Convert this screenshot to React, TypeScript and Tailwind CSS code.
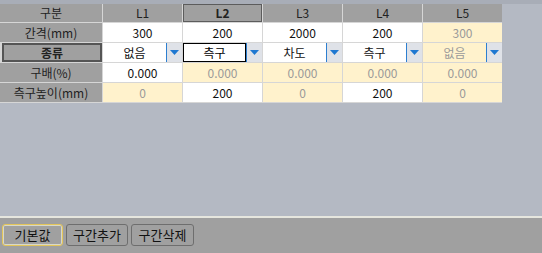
import React from "react";

type Cell = { text: string; tone: "white" | "yellow"; combo?: boolean; focus?: boolean };

const COLS = ["L1", "L2", "L3", "L4", "L5"];

const ROWS: { label: string; bold?: boolean; cells: Cell[] }[] = [
  {
    label: "간격(mm)",
    cells: [
      { text: "300", tone: "white" },
      { text: "200", tone: "white" },
      { text: "2000", tone: "white" },
      { text: "200", tone: "white" },
      { text: "300", tone: "yellow" },
    ],
  },
  {
    label: "종류",
    bold: true,
    cells: [
      { text: "없음", tone: "white", combo: true },
      { text: "측구", tone: "white", combo: true, focus: true },
      { text: "차도", tone: "white", combo: true },
      { text: "측구", tone: "white", combo: true },
      { text: "없음", tone: "yellow", combo: true },
    ],
  },
  {
    label: "구배(%)",
    cells: [
      { text: "0.000", tone: "white" },
      { text: "0.000", tone: "yellow" },
      { text: "0.000", tone: "yellow" },
      { text: "0.000", tone: "yellow" },
      { text: "0.000", tone: "yellow" },
    ],
  },
  {
    label: "측구높이(mm)",
    cells: [
      { text: "0", tone: "yellow" },
      { text: "200", tone: "white" },
      { text: "0", tone: "yellow" },
      { text: "200", tone: "white" },
      { text: "0", tone: "yellow" },
    ],
  },
];

const font = { fontFamily: '"Noto Sans CJK KR", "Noto Sans", sans-serif' };

function DataCell({ cell }: { cell: Cell }) {
  const bg = cell.tone === "white" ? "bg-white" : "bg-[#fff2cc]";
  const color = cell.tone === "white" ? "text-[#111]" : "text-[#9a9a9a]";
  if (!cell.combo) {
    return <div className={`${bg} ${color} flex items-center justify-center`}>{cell.text}</div>;
  }
  return (
    <div className={`${bg} ${color} flex`}>
      <div
        className={`flex-1 flex items-center justify-center ${
          cell.focus ? "border border-black text-black" : ""
        }`}
      >
        {cell.text}
      </div>
      <div className="w-[16px] bg-[#dfe2e8] border-l border-[#2d7fd0] flex items-center justify-center">
        <svg width="9" height="5" viewBox="0 0 9 5">
          <polygon points="0,0 9,0 4.5,5" fill="#1f78d1" />
        </svg>
      </div>
    </div>
  );
}

export default function App() {
  return (
    <div className="w-[542px] h-[253px] flex flex-col text-[12px] overflow-hidden" style={font}>
      <div className="h-[216px] bg-[#b4b9c3] flex flex-col">
        <div className="h-[4px] bg-[#a8adb7]" />
        <div className="grid grid-cols-[102px_repeat(5,79px)] grid-rows-[18px_repeat(4,19px)] gap-px w-[502px] bg-[#d6d6d6] border-b border-[#d6d6d6]">
          <div className="bg-[#a0a0a0] text-[#222] flex items-center justify-center">구분</div>
          {COLS.map((c) => (
            <div
              key={c}
              className={`bg-[#a0a0a0] text-[#222] flex items-center justify-center ${
                c === "L2" ? "font-bold border border-[#5c5c5c]" : ""
              }`}
            >
              {c}
            </div>
          ))}
          {ROWS.map((r) => (
            <React.Fragment key={r.label}>
              <div
                className={`bg-[#a0a0a0] text-[#222] flex items-center justify-center ${
                  r.bold ? "font-bold border-2 border-[#555] ml-[2px]" : ""
                }`}
              >
                {r.label}
              </div>
              {r.cells.map((cell, i) => (
                <DataCell key={i} cell={cell} />
              ))}
            </React.Fragment>
          ))}
        </div>
      </div>
      <div className="h-[2px] bg-[#e6e6de]" />
      <div className="flex-1 bg-[#a0a0a0] flex items-start gap-[3px] pt-[6px] pl-[2px] text-[13px]">
        <button className="w-[61px] h-[22px] rounded-[3px] border border-[#e3c55a] bg-[#a0a0a0] text-[#111] flex items-center justify-center shadow-[inset_0_0_0_1px_#d8d8c8]">
          기본값
        </button>
        <button className="w-[62px] h-[22px] rounded-[3px] border border-[#6e6e6e] bg-[#a0a0a0] text-[#111] flex items-center justify-center">
          구간추가
        </button>
        <button className="w-[63px] h-[22px] rounded-[3px] border border-[#6e6e6e] bg-[#a0a0a0] text-[#111] flex items-center justify-center">
          구간삭제
        </button>
      </div>
    </div>
  );
}
